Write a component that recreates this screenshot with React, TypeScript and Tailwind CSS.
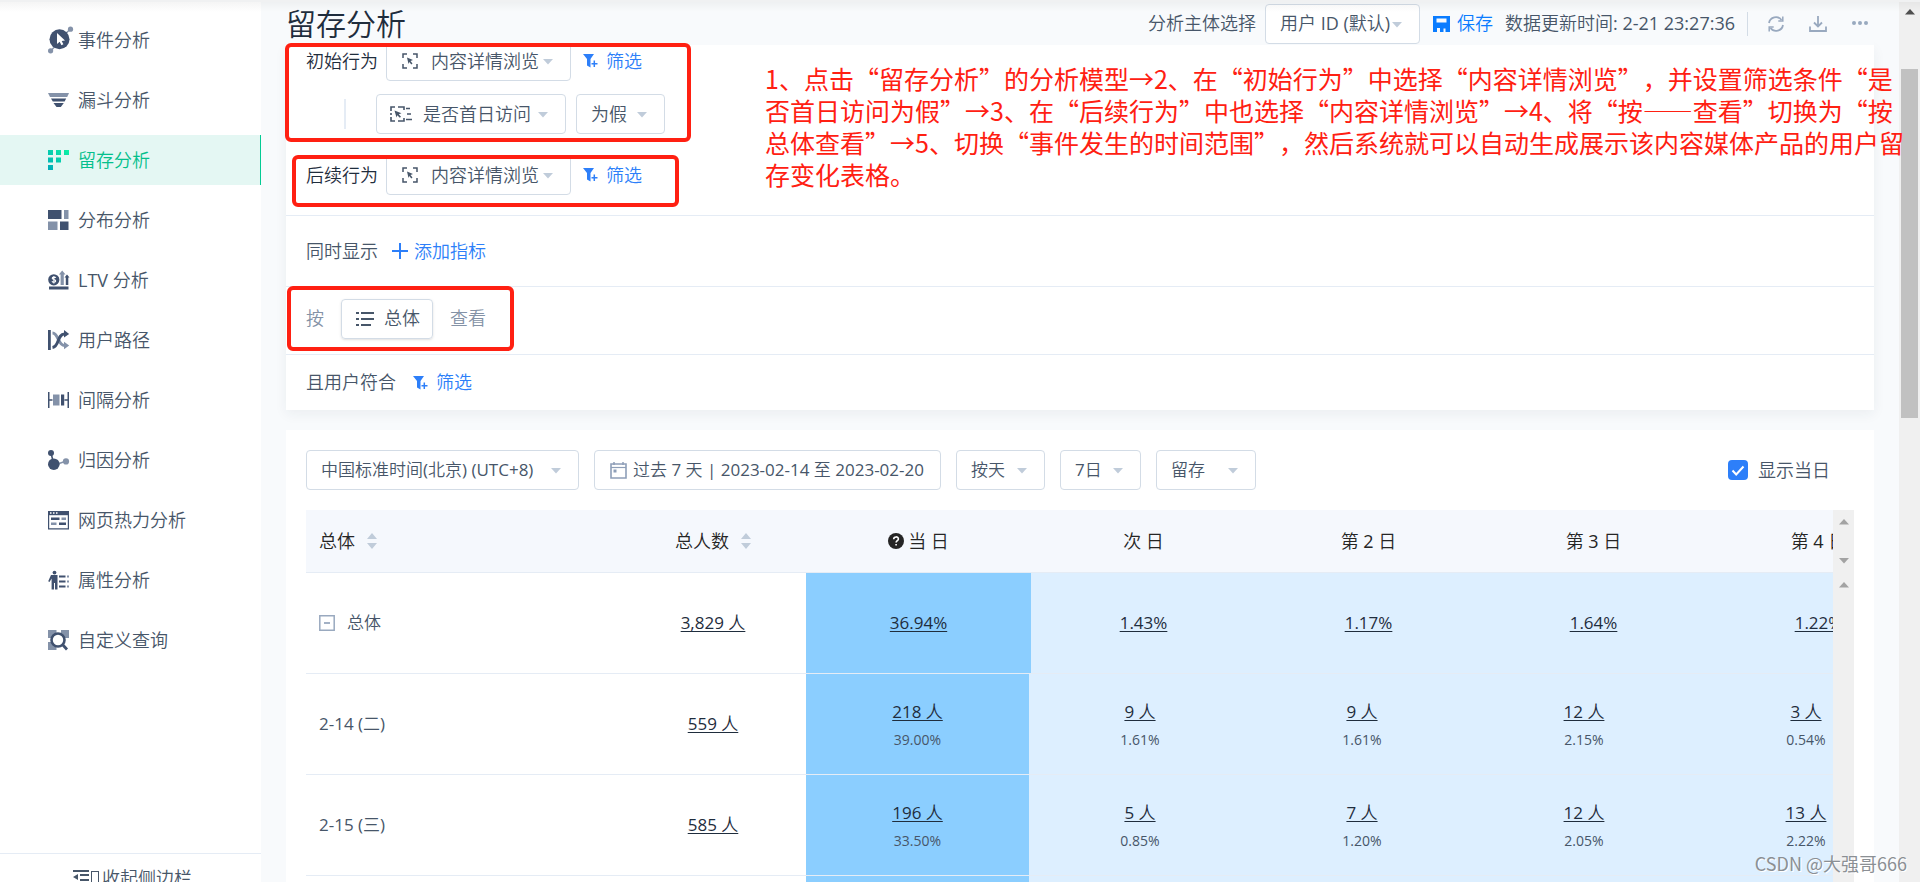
import React from "react";

const DARK = "#40516f";
const LIGHT = "#8492a9";

const icons: Record<string, React.ReactNode> = {
  event: (
    <>
      <path d="M3 22.500l4-4M17 6l5-4.500" stroke={LIGHT} strokeWidth="1.500" />
      <circle cx="11.500" cy="11.200" r="10" fill={DARK} />
      <circle cx="22.500" cy="1.200" r="2.600" fill={LIGHT} />
      <circle cx="2.600" cy="22.800" r="2.600" fill={LIGHT} />
      <path d="M9 5l8 7.500-3.300.4 1.700 3.400-2 .9-1.700-3.400L9 16z" fill="#fff" />
    </>
  ),
  funnel: (
    <>
      <path d="M0 5h21l-1.800 4H2z" fill={LIGHT} />
      <path d="M3 10.500h15.200l-1.600 3H4.800z" fill={DARK} />
      <path d="M5.500 15h10.300l-3 4H8.500z" fill={DARK} />
    </>
  ),
  retention: (
    <>
      <defs>
        <linearGradient id="green" x1="0" y1="1" x2="1" y2="0">
          <stop offset="0" stopColor="#00a9b8" />
          <stop offset="1" stopColor="#0df3a4" />
        </linearGradient>
      </defs>
      <path
        d="M0 2h5v5H0zM8 2h5v5H8zM16 2h5v5h-5zM0 9.500h5v5H0zM8 9.500h5v5H8zM0 17h5v5H0z"
        fill="url(#green)"
      />
    </>
  ),
  distribution: (
    <>
      <path d="M0 2h13.500v9H0zM12 13.500h8.500v8.500H12z" fill={DARK} />
      <path d="M16 2h4.500v9H16zM0 13.500h9.500v8.500H0z" fill={LIGHT} />
    </>
  ),
  ltv: (
    <>
      <circle cx="5.800" cy="11.800" r="5.600" fill={DARK} />
      <path
        d="M7.800 9.800c-.5-1-3.600-1-3.600.5s3.500 1 3.500 2.600-3.200 1.600-3.700.3M5.900 8v7.600"
        stroke="#fff"
        strokeWidth="1.100"
        fill="none"
      />
      <path d="M12.600 17V6.500h-1.700L14.200 2.500l3.300 4h-1.700V17z" fill={LIGHT} />
      <path d="M17.800 17V9.500h-1.300L19 6.500l2.500 3h-1.200V17z" fill={DARK} />
      <path d="M1 18.500h19.500v3H1z" fill={DARK} />
    </>
  ),
  path: (
    <>
      <path d="M0 2h2.800v20H0z" fill={DARK} />
      <path d="M4.500 5c6 0 5.500 12.500 12 12.500" stroke={LIGHT} strokeWidth="3" fill="none" />
      <path d="M16 13.800l5.200 3.700-5.200 3.700z" fill={LIGHT} />
      <path d="M4.500 19.500c7-1 4.500-13.500 12-13.500" stroke={DARK} strokeWidth="3" fill="none" />
      <path d="M16 2l5.200 4-5.200 3.600z" fill={DARK} />
    </>
  ),
  interval: (
    <>
      <path d="M0 4h1.500v16H0zM19.500 4H21v16h-1.500zM1.500 11.300h3v1.400h-3zM16.500 11.300h3v1.400h-3zM13 6.500h3.200v11H13z" fill={DARK} />
      <path d="M5 6.500h6.500v11H5z" fill={LIGHT} />
    </>
  ),
  attribution: (
    <>
      <path d="M3 5l2 8" stroke={DARK} strokeWidth="1.500" />
      <path d="M8 16.500l9-3" stroke={LIGHT} strokeWidth="1.500" />
      <circle cx="3" cy="5" r="3" fill={DARK} />
      <circle cx="5.800" cy="16.200" r="5.800" fill={DARK} />
      <circle cx="18" cy="13.400" r="3.100" fill={LIGHT} />
    </>
  ),
  heat: (
    <>
      <path d="M.6 3.600h19.800v17.200H.6z" fill="none" stroke={DARK} strokeWidth="1.200" />
      <path d="M0 3h21v4.200H0z" fill={DARK} />
      <path d="M2 4.300h1.500v1.400H2zM5 4.300h1.500v1.400H5zM8 4.300h1.500v1.400H8z" fill="#fff" />
      <path d="M3 9.500h8.500v2.500H3zM11 14.500h7v2.500h-7z" fill={DARK} />
      <path d="M13.500 9.500H18v2.500h-4.500zM3 14.500h5.500v2.500H3z" fill={LIGHT} />
    </>
  ),
  attribute: (
    <>
      <circle cx="6.500" cy="4.600" r="1.900" fill={DARK} />
      <path d="M3 7h6.500v14.500H7V15H6v6.500H3.600V10.500L1.500 14 .2 13.300z" fill={DARK} />
      <path d="M11 7.500h6.500v2H11zM11 12.500h6.500v2H11zM11 17.500h6.500v2H11z" fill={DARK} />
      <path d="M19 7.500h2v2h-2zM19 12.500h2v2h-2zM19 17.500h2v2h-2z" fill={LIGHT} />
    </>
  ),
  query: (
    <>
      <path d="M0 2h8.500v8H0zM13 2h8v8h-8zM0 14h8.500v8H0z" fill={LIGHT} />
      <circle cx="10" cy="12" r="6.500" fill="#fff" stroke={DARK} strokeWidth="2.600" />
      <path d="M14.500 16.500l4.500 5" stroke={DARK} strokeWidth="2.800" />
    </>
  ),
};

const menu = [
  { icon: "event", label: "事件分析" },
  { icon: "funnel", label: "漏斗分析" },
  { icon: "retention", label: "留存分析" },
  { icon: "distribution", label: "分布分析" },
  { icon: "ltv", label: "LTV 分析" },
  { icon: "path", label: "用户路径" },
  { icon: "interval", label: "间隔分析" },
  { icon: "attribution", label: "归因分析" },
  { icon: "heat", label: "网页热力分析" },
  { icon: "attribute", label: "属性分析" },
  { icon: "query", label: "自定义查询" },
];

const days = ["当 日", "次 日", "第 2 日", "第 3 日", "第 4 日"];
const summary = ["36.94%", "1.43%", "1.17%", "1.64%", "1.22%"];
const rows = [
  {
    date: "2-14 (二)",
    total: "559 人",
    cells: [
      ["218 人", "39.00%"],
      ["9 人", "1.61%"],
      ["9 人", "1.61%"],
      ["12 人", "2.15%"],
      ["3 人", "0.54%"],
    ],
  },
  {
    date: "2-15 (三)",
    total: "585 人",
    cells: [
      ["196 人", "33.50%"],
      ["5 人", "0.85%"],
      ["7 人", "1.20%"],
      ["12 人", "2.05%"],
      ["13 人", "2.22%"],
    ],
  },
  { date: "", total: "", cells: [["", ""], ["", ""], ["", ""], ["", ""], ["", ""]] },
];

const Dropdown: React.FC<{
  label: string;
  value: string;
  className: string;
  children?: React.ReactNode;
}> = ({ label, value, className, children }) => (
  <div className="relative flex shrink-0">
    {children && (
      <span className="pointer-events-none absolute inset-y-0 left-3 flex items-center">
        {children}
      </span>
    )}
    <select
      aria-label={label}
      className={`h-10 appearance-none rounded border border-[#d3dce6] bg-white text-[#475669] ${className}`}
    >
      <option>{value}</option>
    </select>
    <svg
      viewBox="0 0 10 6"
      className="pointer-events-none absolute top-[18px] right-[18px] h-[6px] w-[10px]"
    >
      <path d="M0 0h10L5 5.500z" fill="#c0ccda" />
    </svg>
  </div>
);

const EventIcon = () => (
  <svg viewBox="0 0 16 16" className="ml-1 h-4 w-4" fill="none" stroke="#475669" strokeWidth="1.500">
    <path d="M1 5V1h4M11 1h4v4M15 11v4h-4M5 15H1v-4" />
    <path d="M5 4.500l6 2.500-2.500 1 2 2.500-1.200 1L7.300 9 6.500 11z" fill="#475669" stroke="none" />
  </svg>
);

const PropertyIcon = () => (
  <svg viewBox="0 0 22 16" className="ml-[2px] h-4 w-[22px]" fill="none" stroke="#475669" strokeWidth="1.600">
    <path d="M1 5V1h4M8 1h6v3M14 12v3H8M5 15H1v-4M1 7v2M16 2.500h4M17 8h4M16 13.500h6" />
    <path d="M4.500 4.500l7 2.700-2.700 1 2.200 2.500-1.200 1.100L7.300 9.300 6.500 11.500z" fill="#475669" stroke="none" />
  </svg>
);

const FilterButton = () => (
  <button className="flex items-center gap-2 text-[18px] text-[#2d7ff9]">
    <svg viewBox="0 0 15 14" className="h-[14px] w-[15px]">
      <path d="M0 0h11L7.500 5v8.500L4 11.500V5z" fill="#2d7ff9" />
      <path d="M11 6.500v6.500M8.500 9.800H14.500" stroke="#fff" strokeWidth="3" />
      <path d="M11.300 6.500v6.500M8.500 9.800H14.500" stroke="#2d7ff9" strokeWidth="1.500" />
    </svg>
    筛选
  </button>
);

const SortIcon = () => (
  <svg viewBox="0 0 10 16" className="h-4 w-[10px]" fill="#c0ccda">
    <path d="M0 6h10L5 0zM0 10h10l-5 6z" />
  </svg>
);

const Arrow: React.FC<{ down?: boolean; dark?: boolean }> = ({ down, dark }) => (
  <svg viewBox="0 0 10 6" className="h-[6px] w-[10px]" fill={dark ? "#505050" : "#a3a3a3"}>
    <path d={down ? "M0 0h10L5 5.500z" : "M0 5.500h10L5 0z"} />
  </svg>
);

const Sidebar = () => (
  <aside className="flex h-full w-[261px] shrink-0 flex-col bg-white">
    <nav className="flex flex-1 flex-col gap-[10px] pt-[15px]">
      {menu.map((item) => (
        <a
          key={item.label}
          href="#"
          className={`flex h-[50px] items-center gap-2 pl-12 text-[18px] ${
            item.icon === "retention"
              ? "border-r border-[#04cb94] bg-[#e4f7f3] text-[#04c08c]"
              : "text-[#475669]"
          }`}
        >
          <svg viewBox="0 0 22 24" className="h-6 w-[22px] overflow-visible">
            {icons[item.icon]}
          </svg>
          {item.label}
        </a>
      ))}
    </nav>
    <button className="flex h-[29px] items-start overflow-hidden border-t border-[#e5ecf5] pt-[10px] pl-[73px] text-[18px] text-[#475669]">
      <svg viewBox="0 0 16 14" className="mt-[6px] mr-[2px] h-[14px] w-4">
        <path d="M0 0h16v2H0zM7 4h9v2H7zM7 9h9v2H7zM0 7l5-3v6z" fill="#475669" />
      </svg>
      <span className="mt-[7px] mr-[3px] h-4 w-2 border border-[#475669]" />
      <span className="leading-7">收起侧边栏</span>
    </button>
  </aside>
);

const Header = () => (
  <header className="z-10 flex h-[45px] shrink-0 items-center bg-[#f8fafc] pt-[2px] pr-[5px] text-[18px] whitespace-nowrap text-[#475669]">
    <h1 className="flex-1 text-[30px] leading-10 text-[#1f2d3d]">留存分析</h1>
    <span className="mr-[9px]">分析主体选择</span>
    <Dropdown label="分析主体选择" value="用户 ID (默认)" className="w-[155px] pl-[14px]" />
    <button className="ml-[13px] flex items-center gap-[7px] text-[#0a7cff]">
      <svg viewBox="0 0 17 16" className="h-4 w-[17px]">
        <path d="M0 0h17v16h-4.500v-3.500h-2V16H0zM3.500 2.500v4h10v-4zM4 12v4h3v-4z" fill="#0a7cff" fillRule="evenodd" />
      </svg>
      保存
    </button>
    <span className="mx-3">数据更新时间: 2-21 23:27:36</span>
    <span className="mr-[19px] h-6 w-px bg-[#d3dce6]" />
    <button aria-label="刷新" className="mr-6">
      <svg viewBox="0 0 18 18" className="h-[18px] w-[18px]" fill="none" stroke="#99a9bf" strokeWidth="1.800">
        <path d="M2 8a7 7 0 0 1 12.500-3M16 10a7 7 0 0 1-12.500 3" />
        <path d="M15.800 1.500v4.500h-4.500M2.200 16.500V12h4.500" strokeWidth="1.500" />
      </svg>
    </button>
    <button aria-label="下载" className="mr-6">
      <svg viewBox="0 0 18 18" className="h-[18px] w-[18px]" fill="none" stroke="#99a9bf" strokeWidth="1.800">
        <path d="M9 1v10M5 7.500l4 4 4-4M1 11.500V16h16v-4.500" />
      </svg>
    </button>
    <button aria-label="更多">
      <svg viewBox="0 0 18 18" className="h-[18px] w-[18px]" fill="#99a9bf">
        <circle cx="3" cy="8" r="2" />
        <circle cx="9" cy="8" r="2" />
        <circle cx="15" cy="8" r="2" />
      </svg>
    </button>
  </header>
);

const Conditions = () => (
  <section className="bg-white text-[18px] text-[#475669] shadow-[0_4px_12px_rgba(31,45,61,0.06)]">
    <div className="border-b border-[#e5ecf5] px-5 pb-5">
      <div className="-mt-1 flex items-center">
        <span className="w-20 text-[#1f2d3d]">初始行为</span>
        <div className="mr-3">
          <Dropdown label="初始行为" value="内容详情浏览" className="w-[185px] pl-11">
            <EventIcon />
          </Dropdown>
        </div>
        <FilterButton />
      </div>
      <div className="mt-[13px] flex items-center gap-[10px]">
        <span className="mr-5 ml-[38px] h-[30px] w-[2px] bg-[#e5ecf5]" />
        <Dropdown label="筛选属性" value="是否首日访问" className="w-[190px] pl-[46px]">
          <PropertyIcon />
        </Dropdown>
        <Dropdown label="筛选条件" value="为假" className="w-[89px] pl-[14px]" />
      </div>
      <div className="mt-[21px] flex items-center">
        <span className="w-20 text-[#1f2d3d]">后续行为</span>
        <div className="mr-3">
          <Dropdown label="后续行为" value="内容详情浏览" className="w-[185px] pl-11">
            <EventIcon />
          </Dropdown>
        </div>
        <FilterButton />
      </div>
    </div>
    <div className="flex h-[71px] items-center border-b border-[#e5ecf5] px-5">
      <span className="mr-[14px]">同时显示</span>
      <button className="flex items-center gap-[6px] text-[#2d7ff9]">
        <svg viewBox="0 0 16 16" className="h-4 w-4" stroke="#2d7ff9" strokeWidth="2">
          <path d="M8 0v16M0 8h16" />
        </svg>
        添加指标
      </button>
    </div>
    <div className="flex h-[68px] items-center border-b border-[#e5ecf5] px-5 pb-1 text-[#8492a6]">
      按
      <button className="mx-[17px] flex h-10 items-center gap-[10px] rounded border border-[#d3dce6] px-3 text-[#475669] shadow-sm">
        <svg viewBox="0 0 18 14" className="ml-[2px] h-[14px] w-[18px]" stroke="#475669" strokeWidth="2">
          <path d="M0 1h3M5 1h13M0 7h3M5 7h13M0 13h3M5 13h10" />
        </svg>
        总体
      </button>
      查看
    </div>
    <div className="flex h-[55px] items-center gap-[17px] px-5">
      <span>且用户符合</span>
      <FilterButton />
    </div>
  </section>
);

const RetentionTable = () => (
  <div className="flex flex-1 overflow-hidden">
    <div className="min-w-0 flex-1 overflow-hidden">
      <table className="w-[1625px] table-fixed border-separate border-spacing-0 text-center text-[17px]">
        <colgroup>
          <col className="w-[314px]" />
          <col className="w-[186px]" />
          {days.map((day) => (
            <col key={day} className="w-[225px]" />
          ))}
        </colgroup>
        <thead className="bg-[#f5f8fd] text-[18px] text-[#252525]">
          <tr className="h-[63px]">
            <th className="border-b border-[#e5ecf5] pl-[13px] font-normal">
              <span className="flex items-center gap-3">总体 <SortIcon /></span>
            </th>
            <th className="border-b border-[#e5ecf5] font-normal">
              <span className="flex items-center justify-center gap-3">总人数 <SortIcon /></span>
            </th>
            {days.map((day, index) => (
              <th key={day} className="border-b border-[#e5ecf5] font-normal">
                <span className="flex items-center justify-center gap-1">
                  {index === 0 && (
                    <svg viewBox="0 0 16 16" className="h-4 w-4">
                      <circle cx="8" cy="8" r="8" fill="#252525" />
                      <path d="M5.700 6.200c0-3 4.700-3 4.700-.2 0 1.700-2.300 1.800-2.300 3.600M8.100 11v1.600" stroke="#fff" strokeWidth="1.600" fill="none" />
                    </svg>
                  )}
                  {day}
                </span>
              </th>
            ))}
          </tr>
        </thead>
        <tbody className="text-[#1f2d3d]">
          <tr className="h-[101px]">
            <td className="border-b border-[#e5ecf5] pl-[13px] text-[#475669]">
              <span className="flex items-center gap-3">
                <svg viewBox="0 0 16 16" className="h-4 w-4" fill="none" stroke="#99a9bf">
                  <path d="M.8.800h14.400v14.400H.8z" strokeWidth="1.500" />
                  <path d="M5 8h6" strokeWidth="1.800" />
                </svg>
                总体
              </span>
            </td>
            <td className="border-b border-[#e5ecf5]">
              <a href="#" className="underline underline-offset-2">3,829 人</a>
            </td>
            {summary.map((value, index) => (
              <td
                key={index}
                className={`border-b border-[#e5ecf5] ${index === 0 ? "bg-[#8bceff]" : "bg-[#ddefff]"}`}
              >
                <a href="#" className="underline underline-offset-2">{value}</a>
              </td>
            ))}
          </tr>
        </tbody>
      </table>
      <table className="w-[1611px] table-fixed border-separate border-spacing-0 text-center text-[17px] text-[#1f2d3d]">
        <colgroup>
          <col className="w-[314px]" />
          <col className="w-[186px]" />
          {days.map((day, index) => (
            <col key={day} className={index === 0 ? "w-[223px]" : "w-[222px]"} />
          ))}
        </colgroup>
        <tbody>
          {rows.map((row) => (
            <tr key={row.date} className="h-[101px]">
              <td className="border-b border-[#e5ecf5] pl-[13px] text-left text-[#475669]">{row.date}</td>
              <td className="border-b border-[#e5ecf5]">
                <a href="#" className="underline underline-offset-2">{row.total}</a>
              </td>
              {row.cells.map(([count, rate], index) => (
                <td
                  key={index}
                  className={`border-b border-[#e5ecf5] pt-[3px] ${index === 0 ? "bg-[#8bceff]" : "bg-[#ddefff]"}`}
                >
                  <a href="#" className="block leading-7 underline underline-offset-2">{count}</a>
                  <span className="block text-[14px] leading-7 text-[#475669]">{rate}</span>
                </td>
              ))}
            </tr>
          ))}
        </tbody>
      </table>
    </div>
    <div className="flex w-[21px] shrink-0 flex-col items-center bg-[#f0f0f0]">
      <div className="flex h-[63px] flex-col justify-between py-[9px]">
        <Arrow />
        <Arrow down />
      </div>
      <div className="pt-[9px]">
        <Arrow />
      </div>
    </div>
  </div>
);

const Report = () => (
  <section className="mt-5 flex min-h-0 flex-1 flex-col bg-white px-5 pt-5 text-[17px] text-[#475669]">
    <div className="mb-5 flex items-center gap-[15px]">
      <Dropdown label="时区" value="中国标准时间(北京) (UTC+8)" className="w-[273px] pl-[14px]" />
      <button className="flex h-10 w-[347px] items-center gap-[6px] rounded border border-[#d3dce6] pl-[15px] whitespace-nowrap">
        <svg viewBox="0 0 17 17" className="h-[17px] w-[17px]" fill="none" stroke="#8e9fb8">
          <path d="M1 2h15v14H1z" strokeWidth="1.600" />
          <path d="M1 5.500h15" strokeWidth="1.200" />
          <path d="M4 0v3M13 0v3" strokeWidth="1.500" />
          <path d="M3.500 7.500h3v3h-3z" fill="#8e9fb8" stroke="none" />
        </svg>
        过去 7 天 | 2023-02-14 至 2023-02-20
      </button>
      <Dropdown label="粒度" value="按天" className="w-[89px] pl-[14px]" />
      <Dropdown label="周期" value="7日" className="w-[81px] pl-[14px]" />
      <Dropdown label="指标" value="留存" className="w-[100px] pl-[14px]" />
      <label className="relative mr-6 ml-auto flex items-center gap-[10px] text-[18px]">
        <input type="checkbox" defaultChecked className="h-5 w-5 appearance-none rounded-sm bg-[#2d7ff9]" />
        <svg viewBox="0 0 20 20" className="pointer-events-none absolute left-0 h-5 w-5" fill="none">
          <path d="M4.500 10.500l3.700 4 7.300-8" stroke="#fff" strokeWidth="2" />
        </svg>
        显示当日
      </label>
    </div>
    <RetentionTable />
  </section>
);

// red marks and the note written over the page
const Annotations = () => (
  <div className="pointer-events-none absolute inset-0 z-20">
    <div className="absolute top-[43px] left-[285px] h-[99px] w-[406px] rounded-md border-4 border-[#ff2012]" />
    <div className="absolute top-[155px] left-[292px] h-[52px] w-[387px] rounded-md border-4 border-[#ff2012]" />
    <div className="absolute top-[286px] left-[287px] h-[65px] w-[227px] rounded-md border-4 border-[#ff2012]" />
    <p className="absolute top-[62px] left-[765px] font-['Noto_Sans_CJK_SC',sans-serif] text-[25px] leading-8 whitespace-nowrap text-[#ff2012] [text-spacing-trim:space-all]">
      1、点击“留存分析”的分析模型→2、在“初始行为”中选择“内容详情浏览”，并设置筛选条件“是
      <br />
      否首日访问为假”→3、在“后续行为”中也选择“内容详情浏览”→4、将“按——查看”切换为“按
      <br />
      总体查看”→5、切换“事件发生的时间范围”，然后系统就可以自动生成展示该内容媒体产品的用户留
      <br />
      存变化表格。
    </p>
    <span className="absolute right-[13px] bottom-[5px] font-['Noto_Sans_CJK_SC',sans-serif] text-[18px] text-[#8b8f94] [text-shadow:1px_1px_0_#fff]">
      CSDN @大强哥666
    </span>
    <div className="absolute inset-x-0 top-0 h-3 border-t-2 border-[#f0f1f2] bg-linear-to-b from-black/4 to-transparent" />
  </div>
);

export default function App() {
  return (
    <div
      lang="zh-CN"
      className="relative flex h-screen overflow-hidden bg-[#f8fafc] font-['Open_Sans','Noto_Sans_CJK_SC_DemiLight','Noto_Sans_CJK_SC_Light','Noto_Sans_CJK_SC',sans-serif] font-normal"
    >
      <Sidebar />
      <main className="flex min-w-0 flex-1 flex-col overflow-hidden px-[25px]">
        <Header />
        <Conditions />
        <Report />
      </main>
      <div className="flex w-[21px] shrink-0 flex-col items-center bg-[#f0f0f0] pt-[9px]">
        <Arrow dark />
        <div className="mt-[54px] h-[349px] w-[17px] bg-[#c1c1c1]" />
      </div>
      <Annotations />
    </div>
  );
}
